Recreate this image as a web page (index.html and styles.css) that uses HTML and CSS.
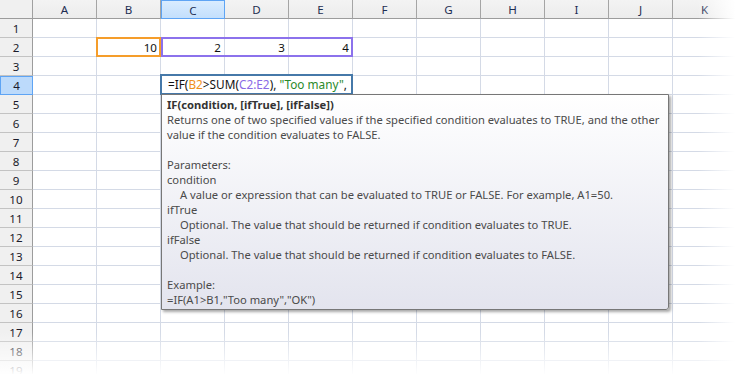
FILE: index.html
```html
<!DOCTYPE html>
<html>

<head>
    <title>Formula hint</title>
    <link rel="stylesheet" href="styles.css">
</head>

<body>
    <div class="sheet">
        <div class="grid">
            <div class="corner"></div>
            <div class="col">A</div><div class="col">B</div><div class="col sel">C</div><div class="col">D</div><div class="col">E</div><div class="col">F</div><div class="col">G</div><div class="col">H</div><div class="col">I</div><div class="col">J</div><div class="col">K</div>

            <div class="row">1</div><div></div><div></div><div></div><div></div><div></div><div></div><div></div><div></div><div></div><div></div><div></div>
            <div class="row">2</div><div></div><div class="num">10</div><div class="num">2</div><div class="num">3</div><div class="num">4</div><div></div><div></div><div></div><div></div><div></div><div></div>
            <div class="row">3</div><div></div><div></div><div></div><div></div><div></div><div></div><div></div><div></div><div></div><div></div><div></div>
            <div class="row sel">4</div><div></div><div></div><div></div><div></div><div></div><div></div><div></div><div></div><div></div><div></div><div></div>
            <div class="row">5</div><div></div><div></div><div></div><div></div><div></div><div></div><div></div><div></div><div></div><div></div><div></div>
            <div class="row">6</div><div></div><div></div><div></div><div></div><div></div><div></div><div></div><div></div><div></div><div></div><div></div>
            <div class="row">7</div><div></div><div></div><div></div><div></div><div></div><div></div><div></div><div></div><div></div><div></div><div></div>
            <div class="row">8</div><div></div><div></div><div></div><div></div><div></div><div></div><div></div><div></div><div></div><div></div><div></div>
            <div class="row">9</div><div></div><div></div><div></div><div></div><div></div><div></div><div></div><div></div><div></div><div></div><div></div>
            <div class="row">10</div><div></div><div></div><div></div><div></div><div></div><div></div><div></div><div></div><div></div><div></div><div></div>
            <div class="row">11</div><div></div><div></div><div></div><div></div><div></div><div></div><div></div><div></div><div></div><div></div><div></div>
            <div class="row">12</div><div></div><div></div><div></div><div></div><div></div><div></div><div></div><div></div><div></div><div></div><div></div>
            <div class="row">13</div><div></div><div></div><div></div><div></div><div></div><div></div><div></div><div></div><div></div><div></div><div></div>
            <div class="row">14</div><div></div><div></div><div></div><div></div><div></div><div></div><div></div><div></div><div></div><div></div><div></div>
            <div class="row">15</div><div></div><div></div><div></div><div></div><div></div><div></div><div></div><div></div><div></div><div></div><div></div>
            <div class="row">16</div><div></div><div></div><div></div><div></div><div></div><div></div><div></div><div></div><div></div><div></div><div></div>
            <div class="row">17</div><div></div><div></div><div></div><div></div><div></div><div></div><div></div><div></div><div></div><div></div><div></div>
            <div class="row">18</div><div></div><div></div><div></div><div></div><div></div><div></div><div></div><div></div><div></div><div></div><div></div>
            <div class="row">19</div><div></div><div></div><div></div><div></div><div></div><div></div><div></div><div></div><div></div><div></div><div></div>
        </div>

        <!-- reference highlights for the formula being typed -->
        <div class="range range-b"></div>
        <div class="range range-c"></div>

        <div class="editor">=IF(<span class="ref-b">B2</span>&gt;SUM(<span class="ref-c">C2:E2</span>), <span class="str">"Too many"</span>,</div>

        <div class="tip">
            <p class="tip-title">IF(condition, [ifTrue], [ifFalse])</p>
            <p>Returns one of two specified values if the specified condition evaluates to TRUE, and the other</p>
            <p>value if the condition evaluates to FALSE.</p>
            <p>&nbsp;</p>
            <p>Parameters:</p>
            <p>condition</p>
            <p class="indent">A value or expression that can be evaluated to TRUE or FALSE. For example, A1=50.</p>
            <p>ifTrue</p>
            <p class="indent">Optional. The value that should be returned if condition evaluates to TRUE.</p>
            <p>ifFalse</p>
            <p class="indent">Optional. The value that should be returned if condition evaluates to FALSE.</p>
            <p>&nbsp;</p>
            <p>Example:</p>
            <p>=IF(A1&gt;B1,"Too many","OK")</p>
        </div>

        <div class="fade-right"></div>
        <div class="fade-bottom"></div>
    </div>
</body>

</html>
```

FILE: styles.css
```css
body {
    margin: 0;
    background: #fff;
    font-family: "Noto Sans", sans-serif;
    overflow: hidden;
}

.sheet {
    position: relative;
    width: 754px;
    height: 374px;
    overflow: hidden;
}

.grid {
    display: grid;
    grid-template-columns: 33px repeat(11, 64px);
    grid-template-rows: 19px repeat(19, 19px);
}

.grid > div {
    box-sizing: border-box;
    border-right: 1px solid #d4dae6;
    border-bottom: 1px solid #d4dae6;
    font-size: 11.6px;
    color: #222;
    display: flex;
    align-items: center;
}

.grid > .corner {
    background: #f0f0f0;
    border-right: 1px solid #a0a0a0;
    border-bottom: 1px solid #9c9c9c;
}

.grid > .col {
    background: linear-gradient(#f3f3f3, #ececec);
    border-right: 1px solid #a5a5a5;
    border-bottom: 1px solid #9c9c9c;
    justify-content: center;
    color: #1d2d52;
    padding-top: 1px;
}

.grid > .row {
    background: #f0f0f0;
    border-right: 1px solid #9c9c9c;
    border-bottom: 1px solid #c3c3c3;
    justify-content: center;
    color: #1b1b2a;
}

.grid > .col.sel {
    background: linear-gradient(#d9ecff, #c3dffc);
    border: 1px solid #5ea4f4;
}

.grid > .row.sel {
    background: #bcdafb;
    border: 1px solid #5ea4f4;
}

.grid > .num {
    justify-content: flex-end;
    padding-right: 3px;
    color: #111;
}

.range {
    position: absolute;
    top: 37px;
    height: 20px;
    box-sizing: border-box;
}

.range-b {
    left: 96px;
    width: 65px;
    border: 2px solid #f59d2a;
}

.range-c {
    left: 161px;
    width: 192px;
    border: 2px solid #8c72ec;
}

.editor {
    position: absolute;
    left: 160px;
    top: 74px;
    width: 193px;
    height: 21px;
    box-sizing: border-box;
    border: 2px solid #4679a9;
    background: #fff;
    padding-left: 6px;
    font-size: 11.8px;
    line-height: 17px;
    color: #111;
    white-space: nowrap;
    overflow: hidden;
}

.ref-b {
    color: #f0901a;
}

.ref-c {
    color: #8a6ae6;
}

.str {
    color: #2a8a2a;
}

.tip {
    position: absolute;
    left: 161px;
    top: 94px;
    width: 508px;
    height: 216px;
    box-sizing: border-box;
    border: 1px solid #777;
    border-radius: 0 0 3px 0;
    background: linear-gradient(#ffffff, #e3e4ee);
    box-shadow: 2px 2px 3px rgba(0, 0, 0, 0.35);
    padding: 2px 5px;
    font-size: 11.2px;
    line-height: 15px;
    color: #4a4a4a;
}

.tip p {
    margin: 0;
    white-space: nowrap;
}

.tip .tip-title {
    font-weight: bold;
    color: #333;
}

.tip .indent {
    padding-left: 13px;
}

.fade-right {
    position: absolute;
    top: 0;
    right: 0;
    width: 56px;
    height: 374px;
    background: linear-gradient(to right, rgba(255, 255, 255, 0), #fff 66%);
}

.fade-bottom {
    position: absolute;
    left: 0;
    bottom: 0;
    width: 754px;
    height: 42px;
    background: linear-gradient(rgba(255, 255, 255, 0), rgba(255, 255, 255, 0.97));
}
```
